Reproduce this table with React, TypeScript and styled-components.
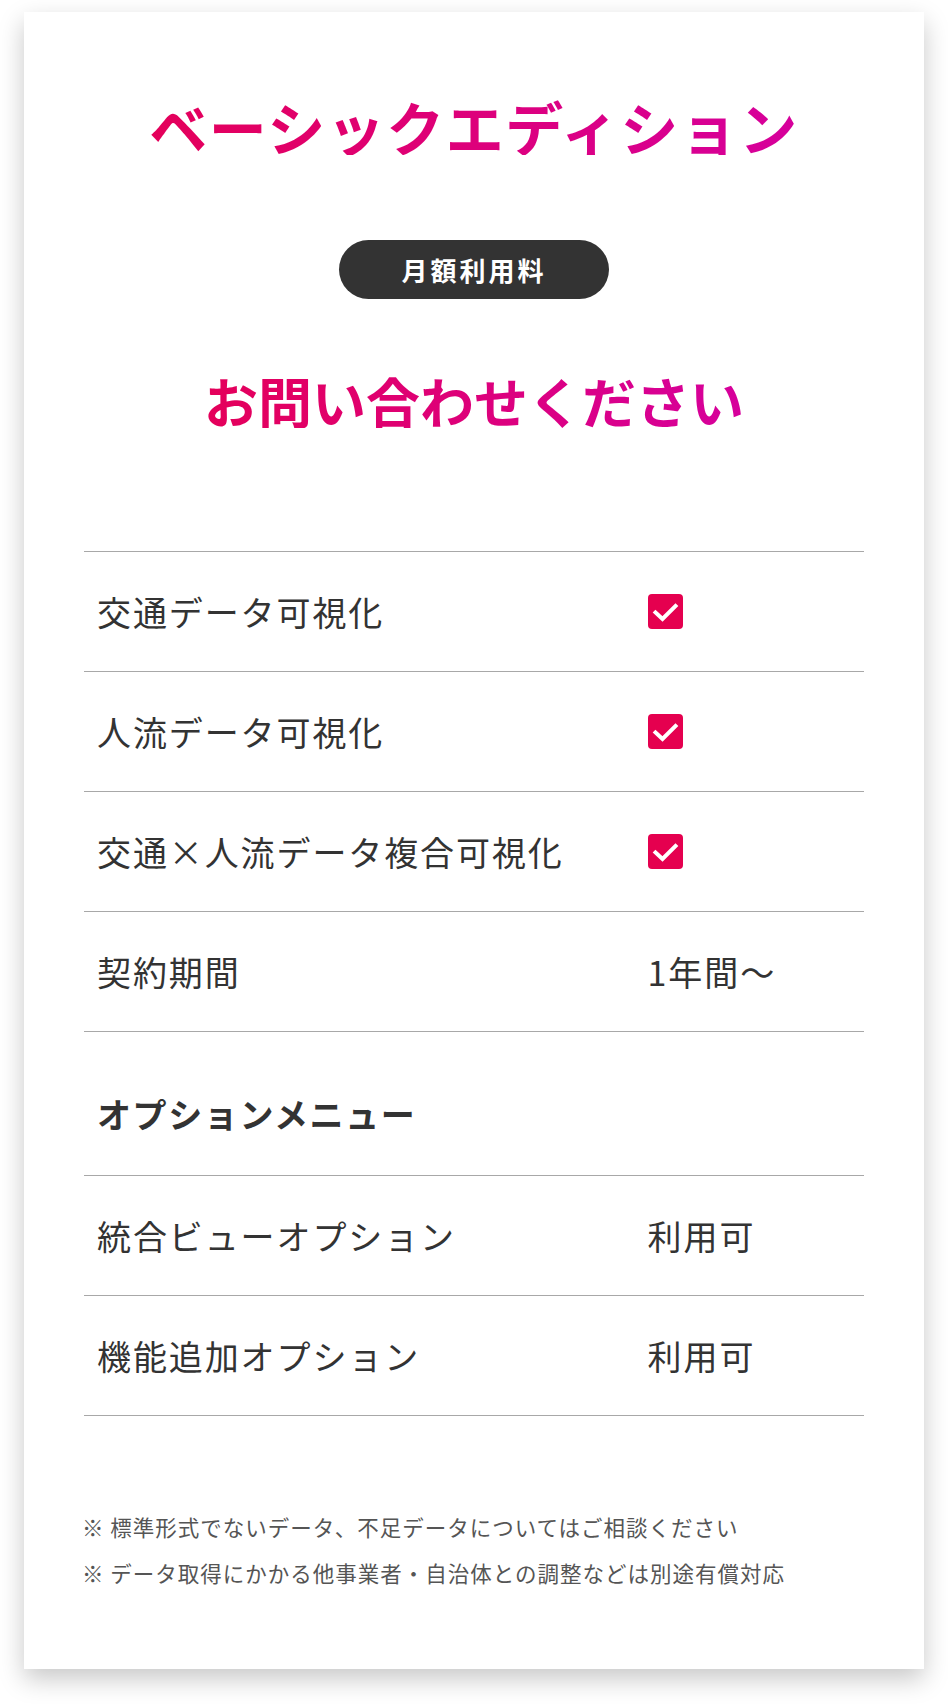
import React from "react";
import styled, { createGlobalStyle } from "styled-components";

const Global = createGlobalStyle`
  html, body { margin: 0; padding: 0; background: #fff; }
  body { font-family: "Noto Sans CJK JP", "Noto Sans", sans-serif; color: #333; }
`;

const Page = styled.div`
  padding: 12px 24px 40px;
`;

const Card = styled.section`
  background: #fff;
  box-shadow: 0 10px 24px rgba(0, 0, 0, 0.22);
  padding: 85px 60px 73px;
  display: flex;
  flex-direction: column;
  align-items: center;
`;

const GradientText = styled.h2<{ $size: number; $spacing: number }>`
  margin: 0;
  display: inline-block;
  font-size: ${(p) => p.$size}px;
  line-height: 1;
  font-weight: 700;
  letter-spacing: ${(p) => p.$spacing}px;
  background: linear-gradient(90deg, #e4005a 0%, #d6009c 100%);
  -webkit-background-clip: text;
  background-clip: text;
  color: transparent;
`;

const Pill = styled.div`
  margin-top: 85px;
  width: 270px;
  height: 59px;
  border-radius: 30px;
  background: #333;
  color: #fff;
  font-size: 26px;
  font-weight: 700;
  letter-spacing: 3px;
  display: flex;
  align-items: center;
  justify-content: center;
`;

const PriceWrap = styled.div`
  margin-top: 75px;
`;

const Table = styled.div`
  margin-top: 122px;
  width: 100%;
  display: flex;
  flex-direction: column;
  border-bottom: 1px solid #a8a8a8;
`;

const Row = styled.div`
  display: grid;
  grid-template-columns: 72% 1fr;
  align-items: center;
  height: 120px;
  box-sizing: border-box;
  border-top: 1px solid #a8a8a8;
  font-size: 34px;
  letter-spacing: 1.9px;
  color: #333;
`;

const Label = styled.div`
  padding-left: 13px;
  white-space: nowrap;
`;

const Value = styled.div`
  display: flex;
  align-items: center;
  padding-left: 2px;
`;

const Heading = styled.div`
  border-top: 1px solid #a8a8a8;
  padding: 65px 0 44px 13px;
  font-size: 34px;
  line-height: 34px;
  font-weight: 700;
  letter-spacing: 1.6px;
  color: #333;
`;

const CheckBox = styled.span`
  width: 35px;
  height: 35px;
  border-radius: 4px;
  background: #e5004f;
  display: inline-flex;
  align-items: center;
  justify-content: center;
`;

const Notes = styled.div`
  margin-top: 88px;
  width: 100%;
  font-size: 21.5px;
  line-height: 46px;
  letter-spacing: 1px;
  color: #555;
  margin-left: -4px;
`;

const Check = () => (
  <CheckBox>
    <svg width="35" height="35" viewBox="0 0 35 35">
      <polyline
        points="7.5,18.5 14.5,25 27.5,12"
        fill="none"
        stroke="#fff"
        strokeWidth="4"
        strokeLinecap="square"
        strokeLinejoin="miter"
      />
    </svg>
  </CheckBox>
);

const features: { label: string; value: React.ReactNode }[] = [
  { label: "交通データ可視化", value: <Check /> },
  { label: "人流データ可視化", value: <Check /> },
  { label: "交通×人流データ複合可視化", value: <Check /> },
  { label: "契約期間", value: "1年間〜" },
];

const options = [
  { label: "統合ビューオプション", value: "利用可" },
  { label: "機能追加オプション", value: "利用可" },
];

export default function App() {
  return (
    <Page>
      <Global />
      <Card>
        <GradientText $size={58} $spacing={1.5}>
          ベーシックエディション
        </GradientText>
        <Pill>月額利用料</Pill>
        <PriceWrap>
          <GradientText $size={54} $spacing={0}>
            お問い合わせください
          </GradientText>
        </PriceWrap>
        <Table>
          {features.map((f) => (
            <Row key={f.label}>
              <Label>{f.label}</Label>
              <Value>{f.value}</Value>
            </Row>
          ))}
          <Heading>オプションメニュー</Heading>
          {options.map((o) => (
            <Row key={o.label}>
              <Label>{o.label}</Label>
              <Value>{o.value}</Value>
            </Row>
          ))}
        </Table>
        <Notes>
          <div>※ 標準形式でないデータ、不足データについてはご相談ください</div>
          <div>※ データ取得にかかる他事業者・自治体との調整などは別途有償対応</div>
        </Notes>
      </Card>
    </Page>
  );
}
